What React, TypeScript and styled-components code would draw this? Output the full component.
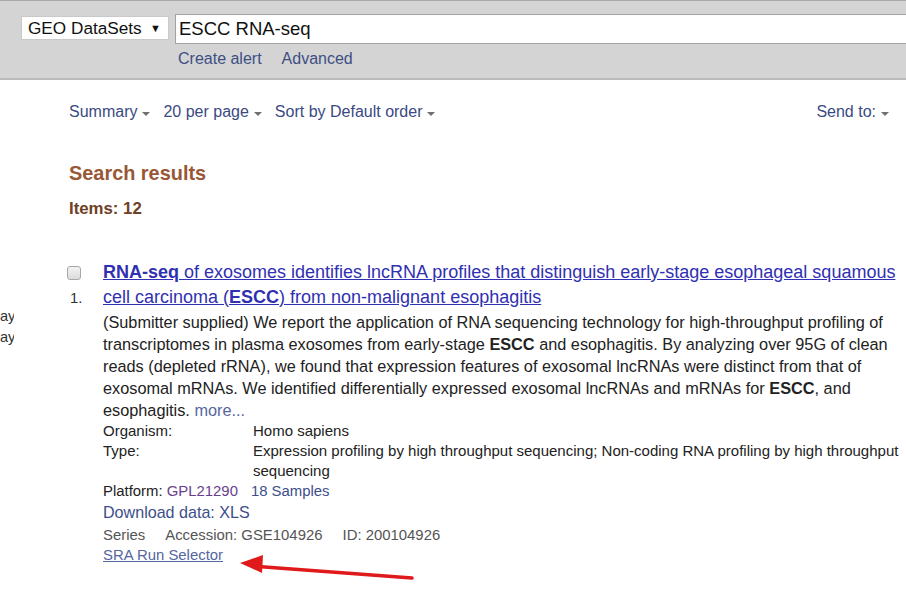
import React from "react";
import styled, { createGlobalStyle } from "styled-components";

const GlobalStyle = createGlobalStyle`
  html, body { margin: 0; padding: 0; background: #fff; }
  body { font-family: "Liberation Sans", Arial, sans-serif; color: #222; }
  * { box-sizing: border-box; }
`;

const Page = styled.div`
  min-height: 590px;
`;

const Header = styled.header`
  height: 80px;
  background: #d4d4d4;
  border-top: 1px solid #a9a9a9;
  border-bottom: 2px solid #bababa;
  padding: 13px 0 0 21px;
  overflow: hidden;
`;

const SearchRow = styled.div`
  display: flex;
  align-items: flex-start;
  gap: 6px;
  white-space: nowrap;
`;

const DbSelect = styled.div`
  flex: none;
  width: 148px;
  height: 24px;
  margin-top: 2px;
  background: #fff;
  border: 1px solid #c9c9c9;
  display: flex;
  align-items: center;
  justify-content: space-between;
  padding: 0 7px 0 6px;
  font-size: 17.2px;
  color: #111;
`;

const SelectArrow = styled.span`
  font-size: 11px;
  color: #111;
`;

const SearchBox = styled.div`
  flex: none;
  width: 800px;
  height: 30px;
  background: #fff;
  border: 1px solid #a3a3a3;
  display: flex;
  align-items: center;
  padding-left: 3px;
  font-size: 18.5px;
  color: #111;
`;

const LinksRow = styled.div`
  display: flex;
  gap: 20px;
  margin: 6px 0 0 157px;
`;

const HeaderLink = styled.a`
  font-size: 16px;
  line-height: 18px;
  color: #3d4f85;
  text-decoration: none;
`;

const Body = styled.div`
  display: grid;
  grid-template-columns: 69px 1fr;
`;

const Sidebar = styled.aside`
  padding-top: 226px;
  overflow: hidden;
`;

const SideLine = styled.div`
  width: 14px;
  font-size: 14.6px;
  line-height: 21px;
  color: #333;
  white-space: nowrap;
  overflow: hidden;
`;

const Main = styled.main`
  min-width: 0;
  padding-top: 22px;
`;

const Toolbar = styled.div`
  display: flex;
  align-items: center;
  padding-right: 17px;
`;

const MenuItem = styled.span<{ $right?: boolean }>`
  display: inline-flex;
  align-items: center;
  font-size: 16px;
  line-height: 20px;
  color: #3a4a82;
  margin-right: ${(p) => (p.$right ? "0" : "13px")};
  margin-left: ${(p) => (p.$right ? "auto" : "0")};
`;

const Caret = styled.span`
  display: inline-block;
  width: 0;
  height: 0;
  margin-left: 5px;
  margin-top: 3px;
  border-left: 4.5px solid transparent;
  border-right: 4.5px solid transparent;
  border-top: 4.5px solid #707070;
`;

const Heading = styled.h2`
  margin: 39px 0 0;
  font-size: 19.9px;
  line-height: 24px;
  font-weight: bold;
  color: #985735;
`;

const Count = styled.div`
  margin-top: 14px;
  font-size: 16.8px;
  line-height: 20px;
  font-weight: bold;
  color: #6e4024;
`;

const Result = styled.section`
  position: relative;
  margin-top: 41px;
  display: grid;
  grid-template-columns: 34px 1fr;
`;

const LeftCol = styled.div`
  display: flex;
  flex-direction: column;
  padding-top: 6px;
`;

const Check = styled.span`
  display: block;
  width: 14px;
  height: 14px;
  margin-left: -2px;
  border: 1px solid #a8a8a8;
  border-radius: 3px;
  background: linear-gradient(#f3f3f3, #dcdcdc);
`;

const Num = styled.span`
  margin-top: 8px;
  margin-left: 1px;
  font-size: 14.8px;
  line-height: 20px;
  color: #333;
`;

const Content = styled.div`
  min-width: 0;
  padding-right: 2px;
`;

const Title = styled.a`
  display: block;
  font-size: 18px;
  line-height: 25px;
  color: #3030b2;
  text-decoration: underline;
`;

const Desc = styled.p`
  margin: 1px 0 0;
  font-size: 16.3px;
  line-height: 22px;
  color: #222;
`;

const MoreLink = styled.a`
  color: #5566a0;
  text-decoration: none;
`;

const MetaGrid = styled.dl`
  margin: 0;
  display: grid;
  grid-template-columns: 150px 1fr;
  font-size: 15px;
  line-height: 20px;
  color: #222;
`;

const MetaTerm = styled.dt`
  margin: 0;
`;

const MetaValue = styled.dd`
  margin: 0;
`;

const Line = styled.div<{ $muted?: boolean; $gap: number }>`
  font-size: 14.9px;
  line-height: 20px;
  color: ${(p) => (p.$muted ? "#555" : "#222")};
  display: flex;
  gap: ${(p) => p.$gap}px;
`;

const InlineLink = styled.a<{ $visited?: boolean }>`
  color: ${(p) => (p.$visited ? "#6a3e8e" : "#3d4f8a")};
  text-decoration: none;
`;

const Download = styled.a`
  display: block;
  font-size: 16.1px;
  line-height: 22px;
  color: #3d4f8a;
  text-decoration: none;
  margin-bottom: 2px;
`;

const SraLink = styled.a`
  display: inline-block;
  font-size: 14.9px;
  line-height: 20px;
  color: #5566a0;
  text-decoration: underline;
`;

const ArrowOverlay = styled.svg`
  position: absolute;
  left: 169px;
  top: 291px;
  overflow: visible;
  pointer-events: none;
`;

export default function App() {
  return (
    <Page>
      <GlobalStyle />
      <Header>
        <SearchRow>
          <DbSelect>
            <span>GEO DataSets</span>
            <SelectArrow>▼</SelectArrow>
          </DbSelect>
          <SearchBox>ESCC RNA-seq</SearchBox>
        </SearchRow>
        <LinksRow>
          <HeaderLink>Create alert</HeaderLink>
          <HeaderLink>Advanced</HeaderLink>
        </LinksRow>
      </Header>
      <Body>
        <Sidebar>
          <SideLine>ay</SideLine>
          <SideLine>ay</SideLine>
        </Sidebar>
        <Main>
          <Toolbar>
            <MenuItem>
              Summary<Caret />
            </MenuItem>
            <MenuItem>
              20 per page<Caret />
            </MenuItem>
            <MenuItem>
              Sort by Default order<Caret />
            </MenuItem>
            <MenuItem $right>
              Send to:<Caret />
            </MenuItem>
          </Toolbar>
          <Heading>Search results</Heading>
          <Count>Items: 12</Count>
          <Result>
            <LeftCol>
              <Check />
              <Num>1.</Num>
            </LeftCol>
            <Content>
              <Title>
                <b>RNA-seq</b> of exosomes identifies lncRNA profiles that distinguish early-stage
                esophageal squamous cell carcinoma (<b>ESCC</b>) from non-malignant esophagitis
              </Title>
              <Desc>
                (Submitter supplied) We report the application of RNA sequencing technology for
                high-throughput profiling of transcriptomes in plasma exosomes from early-stage{" "}
                <b>ESCC</b> and esophagitis. By analyzing over 95G of clean reads (depleted rRNA), we
                found that expression features of exosomal lncRNAs were distinct from that of
                exosomal mRNAs. We identified differentially expressed exosomal lncRNAs and mRNAs
                for <b>ESCC</b>, and esophagitis. <MoreLink>more...</MoreLink>
              </Desc>
              <MetaGrid>
                <MetaTerm>Organism:</MetaTerm>
                <MetaValue>Homo sapiens</MetaValue>
                <MetaTerm>Type:</MetaTerm>
                <MetaValue>
                  Expression profiling by high throughput sequencing; Non-coding RNA profiling by
                  high throughput sequencing
                </MetaValue>
              </MetaGrid>
              <Line $gap={13}>
                <span>
                  Platform: <InlineLink $visited>GPL21290</InlineLink>
                </span>
                <InlineLink>18 Samples</InlineLink>
              </Line>
              <Download>Download data: XLS</Download>
              <Line $muted $gap={20}>
                <span>Series</span>
                <span>Accession: GSE104926</span>
                <span>ID: 200104926</span>
              </Line>
              <SraLink>SRA Run Selector</SraLink>
            </Content>
            <ArrowOverlay width="178" height="30" viewBox="0 0 178 30">
              <line x1="20" y1="15.5" x2="174" y2="27" stroke="#e0191b" strokeWidth="3.5" strokeLinecap="round" />
              <polygon points="2,12 25,4 24,22" fill="#e0191b" />
            </ArrowOverlay>
          </Result>
        </Main>
      </Body>
    </Page>
  );
}
